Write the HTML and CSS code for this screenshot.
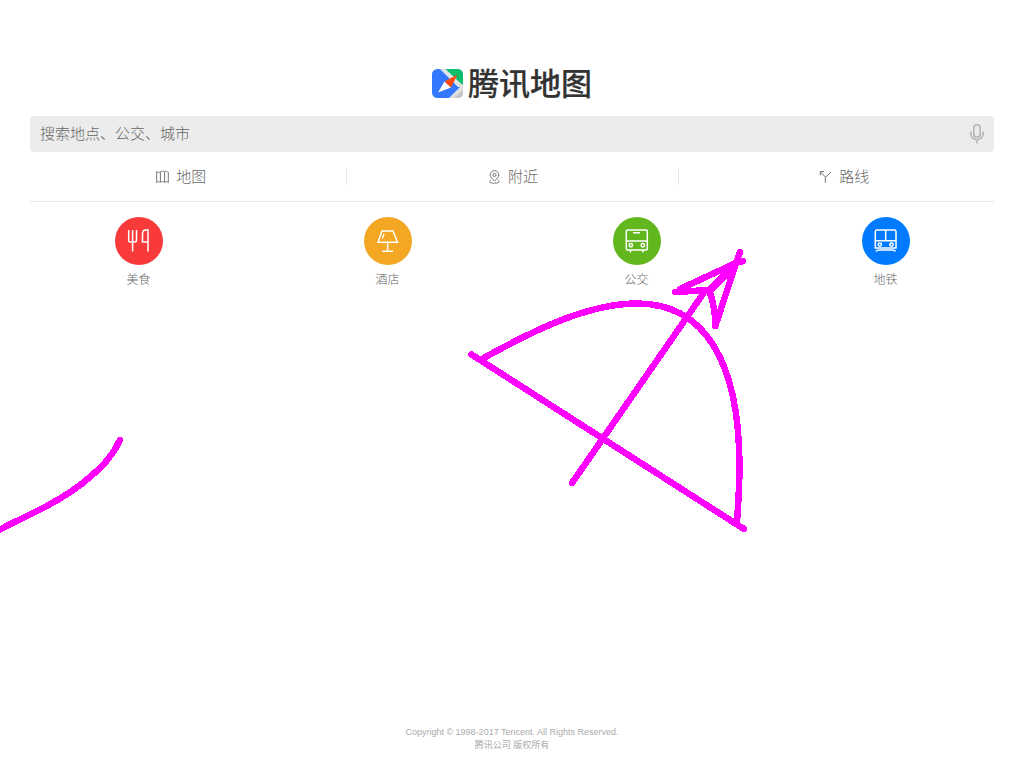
FILE: index.html
```html
<!DOCTYPE html>
<html lang="zh-CN">
<head>
<meta charset="utf-8">
<title>腾讯地图</title>
<link rel="stylesheet" href="styles.css">
</head>
<body>
<div class="page">
  <header class="logo">
    <svg class="logo-mark" viewBox="0 0 31 29">
      <defs><clipPath id="tile"><rect width="31" height="29" rx="5.5"/></clipPath></defs>
      <g clip-path="url(#tile)">
        <rect width="31" height="29" fill="#3478ff"/>
        <path d="M13 0H31V17Z" fill="#0abf68"/>
        <path d="M8 0H13.5L31 16.5V18L26 18Z" fill="#dfe4e6"/>
        <path d="M31 15V29H17Z" fill="#dedede"/>
        <path d="M22 29L31 21V29Z" fill="#c4c5c7"/>
      </g>
      <path d="M6 23.5L12.5 12.5L19 18.5Z" fill="#fff"/>
      <path d="M25.5 5.5L12.5 12.5L19 18.5Z" fill="#ff4a14"/>
    </svg>
    <h1 class="logo-name">腾讯地图</h1>
  </header>
  <div class="search">
    <span class="search-hint">搜索地点、公交、城市</span>
    <svg class="mic" viewBox="0 0 14 20"><rect x="3.8" y=".8" width="6.4" height="12.4" rx="3.2"/><path d="M.8 7.5V9.5a6.2 6.2 0 0 0 12.4 0V7.5M7 15.7V19.5"/></svg>
  </div>
  <nav class="tabs">
    <a class="tab"><svg class="tab-icon" viewBox="0 0 13 14"><path d="M.7 1.5C2 2.8 3 2.8 4.4 1.8C5.8 1 7.2 1 8.6 1.8C10 1 11.4 1.3 12.3 2.4V12.6C11.4 11.6 10 11.4 8.6 12.4C7.4 11.3 5.8 11.3 4.4 12.2C3.2 11.4 2 11.6 .7 12.6ZM4.4 1.8V12.2M8.6 1.8V12.4"/></svg><span>地图</span></a>
    <a class="tab"><svg class="tab-icon" viewBox="0 0 13 14"><path d="M6.5 11.2C4.3 8.8 2.2 7.1 2.2 4.9a4.3 4.3 0 0 1 8.6 0C10.8 7.1 8.7 8.8 6.5 11.2ZM3.2 10.2C.4 11.2 1.5 13.2 6.5 13.2S12.6 11.2 9.8 10.2"/><circle cx="6.5" cy="4.9" r="1.6"/></svg><span>附近</span></a>
    <a class="tab"><svg class="tab-icon" viewBox="0 0 13 14"><path d="M1.3 5.3V1.6H5M1.5 1.8L6.3 7V12.8M12 2L6.3 7.6"/></svg><span>路线</span></a>
  </nav>
  <div class="rule"></div>
  <div class="categories">
    <a class="category"><span class="disc food"><svg viewBox="0 0 24 24"><path d="M1.7 1V11.5q0 1.5 1.5 1.5H8q1.5 0 1.5-1.5V1M5.6 1V22.5M21 22.5V1H19Q15.5 1 15.5 4.5V13H21"/></svg></span><span>美食</span></a>
    <a class="category"><span class="disc hotel"><svg viewBox="0 0 24 24"><path d="M6 2H17L21.5 13.2H2ZM8 5L6.3 9.5M11.6 13.2V22M6 22.2H17.2"/></svg></span><span>酒店</span></a>
    <a class="category"><span class="disc bus"><svg viewBox="0 0 24 24"><rect x="1.3" y="1" width="21" height="20" rx="1.2"/><path d="M1.3 12H22.3M8 3.8H15M5.5 21V23.5M17.8 21V23.5"/><circle cx="5.8" cy="16.3" r="1.7"/><circle cx="17.8" cy="16.3" r="1.7"/></svg></span><span>公交</span></a>
    <a class="category"><span class="disc metro"><svg viewBox="0 0 24 24"><path d="M3 1H20.5Q22 1 22 2.5V19H1.3V2.5Q1.3 1 3 1ZM1.3 11.8H22M11.7 1V11.8M1.8 22.5Q3 21 5 21H18.5Q20.5 21 21.5 22.5"/><circle cx="5.8" cy="15.6" r="1.7"/><circle cx="17.5" cy="15.6" r="1.7"/></svg></span><span>地铁</span></a>
  </div>
  <footer class="footer"><p>Copyright © 1998-2017 Tencent. All Rights Reserved.</p><p>腾讯公司 版权所有</p></footer>
</div>
<svg class="ink" viewBox="0 0 1024 768">
  <path d="M0 529.5C18 520 30 515 45 507S80 486 90 477C105 464 113 455 120 440"/>
  <path d="M471.5 354.5L744 529M481 359.5C527 334 585 303.5 637 303.5C705 303.5 739 362 739.5 465C739.5 488 738 506 737 522M572 483L705 291M740 463V465"/>
  <path d="M740 252L736 263L709 290L675 292M743 261L736 263L680 289M675 292H686M736 263L717 321M709 290Q715 305 715.5 326M738 262L712 289"/>
</svg>
</body>
</html>
```
FILE: styles.css
```css
body {
  margin: 0;
  background: #fff;
  font-family: "Liberation Sans", "Noto Sans CJK SC", sans-serif;
  color: #666;
}
.page {
  box-sizing: border-box;
  width: 1024px;
  height: 768px;
  padding: 68px 30px 16px;
  display: flex;
  flex-direction: column;
}
.logo {
  height: 48px;
  display: flex;
  justify-content: center;
  align-items: flex-start;
  gap: 5px;
}
.logo-mark { width: 31px; height: 29px; margin-top: 1px; }
.logo-name {
  margin: 0;
  font-size: 31px;
  font-weight: 500;
  line-height: 34px;
  color: #333;
  -webkit-text-stroke: .2px #333;
}
.search {
  box-sizing: border-box;
  height: 36px;
  padding: 0 10px;
  display: flex;
  align-items: center;
  justify-content: space-between;
  border-radius: 4px;
  background: #ececec;
  font-size: 15px;
  font-weight: 300;
}
.search-hint { padding-bottom: 3px; }
.mic { width: 14px; height: 20px; fill: none; stroke: #b5b5b5; stroke-width: 1.6; }
.tabs {
  height: 49px;
  margin: 0 -15px;
  display: grid;
  grid-template-columns: repeat(3, 1fr);
  align-items: center;
  font-size: 15px;
  font-weight: 300;
}
.tab {
  height: 16px;
  display: flex;
  align-items: center;
  justify-content: center;
  gap: 7px;
  padding-left: 1px;
}
.tab span { padding-bottom: 2px; }
.tab + .tab { border-left: 1px solid #e5e5e5; }
.tab-icon { width: 13px; height: 14px; fill: none; stroke: #777; stroke-width: 1; }
.rule { height: 1px; background: #e9e9e9; }
.categories {
  margin: 15px -16px 0;
  display: grid;
  grid-template-columns: repeat(4, 1fr);
  font-size: 12px;
  font-weight: 300;
}
.category {
  display: flex;
  flex-direction: column;
  align-items: center;
  gap: 5px;
  line-height: 20px;
}
.disc {
  width: 48px;
  height: 48px;
  display: grid;
  place-items: center;
  border-radius: 50%;
}
.disc svg { width: 24px; height: 24px; fill: none; stroke: #fff; stroke-width: 1.5; overflow: visible; }
.food { background: #f93a3a; }
.hotel { background: #f3a722; }
.bus { background: #61b71d; }
.metro { background: #007aff; }
.footer {
  margin-top: auto;
  text-align: center;
  font-size: 9px;
  line-height: 13px;
  color: #aaa;
}
.footer p { margin: 0; }
.ink {
  position: absolute;
  left: 0;
  top: 0;
  width: 1024px;
  height: 768px;
  pointer-events: none;
  fill: none;
  stroke: #f0f;
  stroke-width: 6.5;
  stroke-linecap: round;
  stroke-linejoin: round;
  shape-rendering: crispEdges;
}
```
